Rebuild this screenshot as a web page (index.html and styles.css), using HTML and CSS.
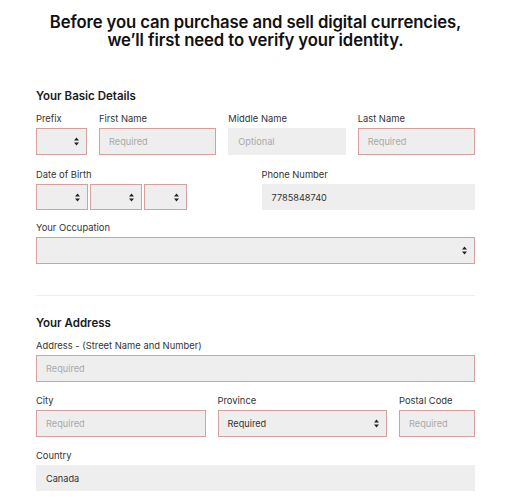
FILE: index.html
```html
<!DOCTYPE html>
<html lang="en">
<head>
<meta charset="utf-8">
<title>Verify your identity</title>
<link rel="stylesheet" href="styles.css">
</head>
<body>
<div class="page">
  <h1 class="title">Before you can purchase and sell digital currencies,<br>we’ll first need to verify your identity.</h1>

  <section class="sec sec-basic">
    <h2 class="sec-title">Your Basic Details</h2>
    <div class="row row-name">
      <div class="field">
        <div class="label">Prefix</div>
        <div class="box err sel"><svg class="arr" width="5" height="9" viewBox="0 0 5 9"><path d="M0 3.6 L2.5 0.6 L5 3.6Z M0 5.4 L2.5 8.4 L5 5.4Z"/></svg></div>
      </div>
      <div class="field">
        <div class="label">First Name</div>
        <div class="box err"><span class="ph">Required</span></div>
      </div>
      <div class="field">
        <div class="label">Middle Name</div>
        <div class="box"><span class="ph">Optional</span></div>
      </div>
      <div class="field">
        <div class="label">Last Name</div>
        <div class="box err"><span class="ph">Required</span></div>
      </div>
    </div>

    <div class="row row-two">
      <div class="field">
        <div class="label">Date of Birth</div>
        <div class="dob">
          <div class="box err sel"><svg class="arr" width="5" height="9" viewBox="0 0 5 9"><path d="M0 3.6 L2.5 0.6 L5 3.6Z M0 5.4 L2.5 8.4 L5 5.4Z"/></svg></div>
          <div class="box err sel"><svg class="arr" width="5" height="9" viewBox="0 0 5 9"><path d="M0 3.6 L2.5 0.6 L5 3.6Z M0 5.4 L2.5 8.4 L5 5.4Z"/></svg></div>
          <div class="box err sel"><svg class="arr" width="5" height="9" viewBox="0 0 5 9"><path d="M0 3.6 L2.5 0.6 L5 3.6Z M0 5.4 L2.5 8.4 L5 5.4Z"/></svg></div>
        </div>
      </div>
      <div class="field">
        <div class="label">Phone Number</div>
        <div class="box short"><span class="val">7785848740</span></div>
      </div>
    </div>

    <div class="row">
      <div class="field">
        <div class="label">Your Occupation</div>
        <div class="box err sel"><svg class="arr" width="5" height="9" viewBox="0 0 5 9"><path d="M0 3.6 L2.5 0.6 L5 3.6Z M0 5.4 L2.5 8.4 L5 5.4Z"/></svg></div>
      </div>
    </div>
  </section>

  <div class="divider"></div>

  <section class="sec sec-address">
    <h2 class="sec-title">Your Address</h2>
    <div class="row">
      <div class="field">
        <div class="label">Address - (Street Name and Number)</div>
        <div class="box err"><span class="ph">Required</span></div>
      </div>
    </div>
    <div class="row row-city">
      <div class="field">
        <div class="label">City</div>
        <div class="box err"><span class="ph">Required</span></div>
      </div>
      <div class="field">
        <div class="label">Province</div>
        <div class="box err sel"><span class="val">Required</span><svg class="arr" width="5" height="9" viewBox="0 0 5 9"><path d="M0 3.6 L2.5 0.6 L5 3.6Z M0 5.4 L2.5 8.4 L5 5.4Z"/></svg></div>
      </div>
      <div class="field">
        <div class="label">Postal Code</div>
        <div class="box err"><span class="ph">Required</span></div>
      </div>
    </div>
    <div class="row">
      <div class="field">
        <div class="label">Country</div>
        <div class="box short"><span class="val">Canada</span></div>
      </div>
    </div>
  </section>
</div>
</body>
</html>
```

FILE: styles.css
```css
* { box-sizing: border-box; }

body {
  margin: 0;
  background: #ffffff;
  font-family: "Inter", "Open Sans", "DejaVu Sans", sans-serif;
  color: #222222;
}

.page {
  padding: 13px 37px 0 36px;
}

.title {
  margin: 0;
  text-align: center;
  font-size: 16.7px;
  line-height: 18px;
  font-weight: 600;
  color: #111111;
  letter-spacing: -0.1px;
}

.sec-basic { padding-top: 40px; }

.sec-title {
  margin: 0 0 10px;
  font-size: 11.5px;
  line-height: 14px;
  font-weight: 600;
  color: #1a1a1a;
}

.row {
  display: grid;
  grid-template-columns: 1fr;
  margin-bottom: 14px;
}

.sec > .row:last-child { margin-bottom: 0; }

.row-name {
  grid-template-columns: 51px 1fr 1fr 1fr;
  column-gap: 12px;
}

.row-two {
  grid-template-columns: 1fr 1fr;
  column-gap: 12px;
  margin-bottom: 12px;
}

.row-city {
  grid-template-columns: 1fr 1fr 76px;
  column-gap: 12px;
}

.field {
  display: flex;
  flex-direction: column;
}

.label {
  font-size: 9.4px;
  line-height: 12px;
  color: #333333;
  margin-bottom: 3px;
  white-space: nowrap;
}

.box {
  height: 27px;
  background: #eeeeee;
  border: 1px solid #eeeeee;
  display: flex;
  align-items: center;
  padding: 0 9px;
  font-size: 9.2px;
}

.box.short { height: 26px; }

.box.err { border-color: #d7a0a0; }

.sel { justify-content: space-between; padding-right: 7px; }
.sel .arr { margin-left: auto; }

.arr { fill: #222222; flex: none; }

.ph { color: #a9a9a9; }
.val { color: #333333; }

.dob {
  display: grid;
  grid-template-columns: 52px 52px 43px;
  column-gap: 2px;
}

.dob .box { height: 26px; }

.divider {
  height: 1px;
  background: #eeeeee;
  margin: 31px 0 20px;
}

.sec-address .sec-title { margin-bottom: 10px; }
.sec-address .row { margin-bottom: 13px; }
.sec-address .row:last-child { margin-bottom: 0; }
```
